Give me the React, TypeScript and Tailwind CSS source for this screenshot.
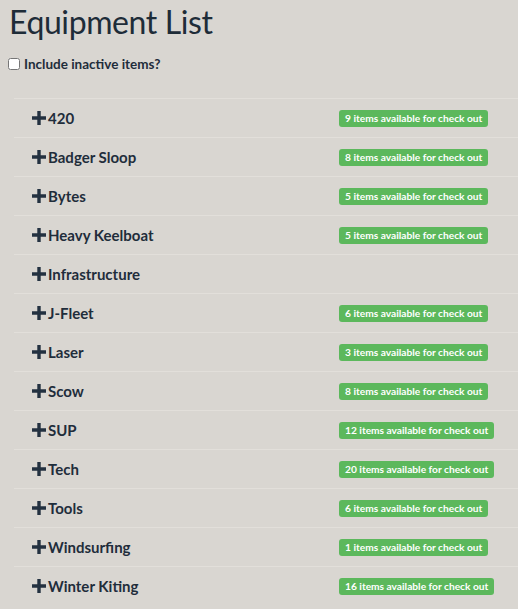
import React from 'react';

const items: { name: string; count?: number }[] = [
  { name: '420', count: 9 },
  { name: 'Badger Sloop', count: 8 },
  { name: 'Bytes', count: 5 },
  { name: 'Heavy Keelboat', count: 5 },
  { name: 'Infrastructure' },
  { name: 'J-Fleet', count: 6 },
  { name: 'Laser', count: 3 },
  { name: 'Scow', count: 8 },
  { name: 'SUP', count: 12 },
  { name: 'Tech', count: 20 },
  { name: 'Tools', count: 6 },
  { name: 'Windsurfing', count: 1 },
  { name: 'Winter Kiting', count: 16 },
];

// Chunky plus, like the old glyphicon-plus.
const Plus = () => (
  <svg width="14" height="14" viewBox="0 0 14 14" className="shrink-0">
    <path d="M5.3 0h3.4v5.3H14v3.4H8.7V14H5.3V8.7H0V5.3h5.3z" fill="#233140" />
  </svg>
);

export default function App() {
  return (
    <div
      className="min-h-screen bg-[#d9d6d1] text-[#1f2d3b] overflow-hidden"
      style={{ fontFamily: 'Lato, "Open Sans", sans-serif' }}
    >
      <h1 className="pl-[9px] pt-[2px] text-[32px] leading-[40px] tracking-[-0.4px] font-normal text-[#1e2c38]">
        Equipment List
      </h1>

      <label className="flex items-center gap-[4px] pl-[8px] mt-[12px] text-[13.5px] font-bold">
        <input type="checkbox" className="w-[12px] h-[12px] m-0" />
        Include inactive items?
      </label>

      <ul className="mt-[24px] ml-[14px]">
        {items.map((it) => (
          <li
            key={it.name}
            className="flex items-center h-[39px] border-t border-[#e2dfda]"
          >
            <div className="w-[325px] flex items-center pl-[18px]">
              <Plus />
              <span className="ml-[2px] text-[15px] font-bold leading-none">{it.name}</span>
            </div>
            {it.count !== undefined && (
              <span className="bg-[#5cb85c] text-white text-[10.2px] font-bold leading-none rounded-[3px] px-[6px] pt-[3px] pb-[4px] whitespace-nowrap">
                {it.count} items available for check out
              </span>
            )}
          </li>
        ))}
      </ul>
    </div>
  );
}
